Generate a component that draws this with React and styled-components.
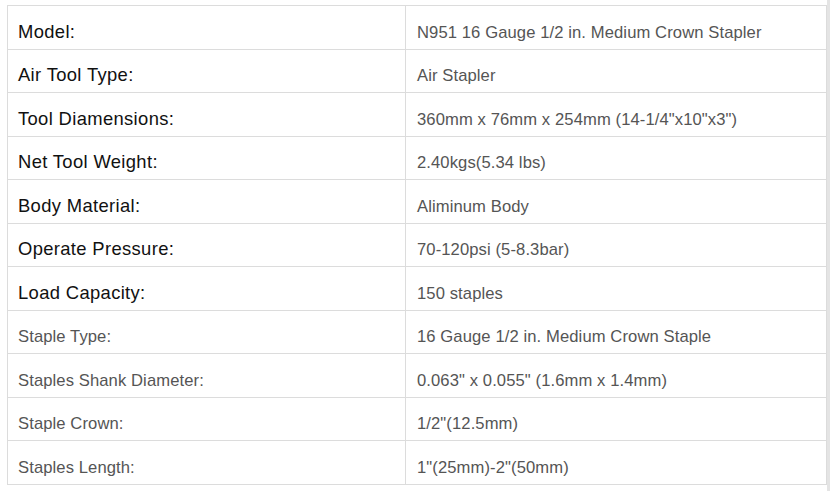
import React from "react";
import styled, { createGlobalStyle } from "styled-components";

const Global = createGlobalStyle`
  html, body { margin: 0; padding: 0; background: #fff; }
  body { font-family: "Liberation Sans", Arial, sans-serif; }
`;

const Page = styled.div`
  display: flex;
  width: 830px;
  height: 491px;
  overflow: hidden;
  background: #fff;
`;

const Content = styled.div`
  flex: 1;
  padding: 5px 0 0 7px;
`;

const Scrollbar = styled.div`
  width: 3px;
  height: 491px;
  background: #e4e4e4;
`;

const Table = styled.div`
  display: grid;
  grid-template-columns: 398px 421px;
  grid-auto-rows: 43.5px;
  border-top: 1px solid #dcdcdc;
  border-left: 1px solid #dcdcdc;
  width: 819px;
`;

const Cell = styled.div`
  box-sizing: border-box;
  border-right: 1px solid #dcdcdc;
  border-bottom: 1px solid #dcdcdc;
  padding: 0 0 0 ${(p) => (p.$value ? 11 : 10)}px;
  padding-top: ${(p) => (p.$strong ? 15.7 : 16.7)}px;
  font-size: ${(p) => (p.$strong ? 18.4 : 16.6)}px;
  line-height: ${(p) => (p.$strong ? 20 : 19)}px;
  letter-spacing: ${(p) => (p.$strong ? 0.35 : 0.1)}px;
  color: ${(p) => (p.$strong ? "#111" : "#555")};
  white-space: nowrap;
`;

const rows = [
  ["Model:", "N951 16 Gauge 1/2 in. Medium Crown Stapler", true],
  ["Air Tool Type:", "Air Stapler", true],
  ["Tool Diamensions:", "360mm x 76mm x 254mm (14-1/4\"x10\"x3\")", true],
  ["Net Tool Weight:", "2.40kgs(5.34 lbs)", true],
  ["Body Material:", "Aliminum Body", true],
  ["Operate Pressure:", "70-120psi (5-8.3bar)", true],
  ["Load Capacity:", "150 staples", true],
  ["Staple Type:", "16 Gauge 1/2 in. Medium Crown Staple", false],
  ["Staples Shank Diameter:", "0.063\" x 0.055\" (1.6mm x 1.4mm)", false],
  ["Staple Crown:", "1/2\"(12.5mm)", false],
  ["Staples Length:", "1\"(25mm)-2\"(50mm)", false],
];

export default function App() {
  return (
    <Page>
      <Global />
      <Content>
        <Table>
          {rows.map(([label, value, strong]) => (
            <React.Fragment key={label}>
              <Cell $strong={strong}>{label}</Cell>
              <Cell $value>{value}</Cell>
            </React.Fragment>
          ))}
        </Table>
      </Content>
      <Scrollbar />
    </Page>
  );
}
